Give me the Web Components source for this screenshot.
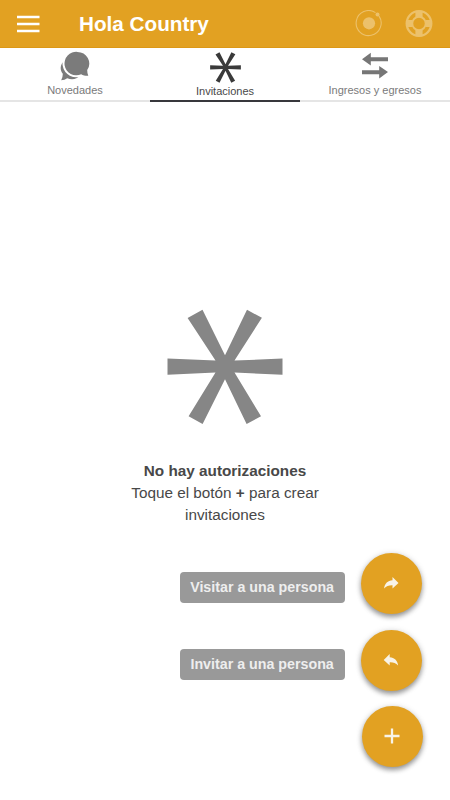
<!DOCTYPE html>
<html lang="es">
<head>
<meta charset="utf-8">
<title>Hola Country</title>
<style>
html,body{margin:0;height:100%;background:#fff;font-family:"Liberation Sans",Arial,sans-serif}
body{--brand:#e2a122;overflow:hidden}
</style>
</head>
<body>
<country-app></country-app>
<script>
const icons = {
  menu: '<svg width="24" height="18" viewBox="0 0 24 18"><path d="M1 2h22.500M1 9h22.500M1 16h22.500" stroke="#fff" stroke-width="2.300"/></svg>',
  radar: '<svg width="28" height="28" viewBox="0 0 28 28" fill="#ecc16b"><circle cx="14" cy="13.300" r="6.100"/><path d="M20.500 2.600a12.500 12.500 0 1 0 3.400 3.300" fill="none" stroke="#ecc16b" stroke-width="1.100"/><circle cx="22.500" cy="4.500" r="2"/></svg>',
  buoy: '<svg width="28" height="28" viewBox="0 0 28 28" fill="none" stroke="#ecc16b"><circle cx="14" cy="13.500" r="12.300" stroke-width="2.300"/><circle cx="14" cy="13.500" r="6.700" stroke-width="1.900"/><path d="M14 .8v6.400M14 19.800v6.400M1.200 13.500h6.400M20.400 13.500h6.400" stroke-width="7.200"/></svg>',
  chat: '<svg width="30" height="30" viewBox="0 0 30 30" fill="#7b7b7b"><path d="M6 8.500C-.2 12.500-.6 18.500 2.800 22.700Q2.900 26.200 1.200 29.200Q4.700 29 7.200 27.200C12 29.400 17 28.200 20 24.500L16 12z"/><path d="M17.400.9A11.800 11.700 0 1 0 21.200 23.200C23.200 24.500 25.800 25 28.300 24.800Q27.200 22.500 27.200 19.100A11.800 11.700 0 0 0 17.400.9z" stroke="#fff" stroke-width="4" paint-order="stroke"/></svg>',
  star: '<svg viewBox="0 0 116 116"><path fill="currentColor" d="M20.600 8.900 35.500.8 58 46.200 80 .8l14.900 8L67.500 51.500 115.500 49.600v16.200L67.500 63.400 94 107.200 79.600 115 58 70.300 35.600 115 21.600 107.200 48.500 63.400.5 65.800V49.600L48.500 51.500z"/></svg>',
  swap: '<svg width="28" height="28" viewBox="0 0 28 28" fill="#767676"><path d="M1 7.200 9.800.8v4.500H27v3.900H9.800v4.400zM27 20.100 18.200 13.900v4.300H1v4h17.200v4.400z"/></svg>',
  forward: '<svg width="16" height="14" viewBox="0 0 16 14"><path fill="#f8f3e8" d="M15.500 6.900 9.500 1v3.300C4.700 4.700 1.900 7.300 1.100 12.500c2.300-2.600 4.900-3.300 8.400-3.200v3.300z"/></svg>',
  back: '<svg width="16" height="14" viewBox="0 0 16 14"><path fill="#f8f3e8" d="M.7 6.900 6.700 1v3.300c4.800.4 7.600 3 8.400 8.200-2.300-2.600-4.900-3.300-8.400-3.200v3.300z"/></svg>',
  plus: '<svg width="16" height="16" viewBox="0 0 16 16"><path d="M8 .5v15M.5 8h15" stroke="#f8f3e8" stroke-width="2.300"/></svg>'
};
class Base extends HTMLElement {
  connectedCallback(){ if(!this.shadowRoot) this.attachShadow({mode:'open'}).innerHTML=this.view(); }
}
customElements.define('app-icon', class extends Base {
  view(){ return `<style>:host{display:block;flex:none}svg{display:block}:host([name=star]) svg{width:100%;height:100%}</style>${icons[this.getAttribute('name')]}`; }
});
customElements.define('app-header', class extends Base {
  view(){ return `<style>
:host{display:flex;align-items:center;height:48px;box-sizing:border-box;padding:0 17px 0 16px;background:var(--brand);border-bottom:1px solid #dc9817;color:#fff;flex:none}
h1{margin:0 auto 0 39px;font-size:20.7px;line-height:24px;white-space:nowrap}
.radar{margin-right:22px}
</style><app-icon name="menu"></app-icon><h1><slot></slot></h1><app-icon class="radar" name="radar"></app-icon><app-icon name="buoy"></app-icon>`; }
});
customElements.define('app-tab', class extends Base {
  view(){ return `<style>
:host{display:flex;flex-direction:column;align-items:center;flex:1;height:54px;box-sizing:border-box;border-bottom:2px solid #e5e5e5;color:#7a7a7a;font-size:11px}
:host([active]){color:#484848;border-color:#38383c}
.icon{height:34px;display:grid;place-items:center;padding-top:1px;box-sizing:border-box}
app-icon[name=star]{width:31px;height:31px;padding-top:3px;color:#3a3a3a}
span{line-height:16px;white-space:nowrap}
:host([active]) span{padding-top:1px}
</style><div class="icon"><app-icon name="${this.getAttribute('icon')}"></app-icon></div><span><slot></slot></span>`; }
});
customElements.define('empty-state', class extends Base {
  view(){ return `<style>
:host{display:flex;flex-direction:column;align-items:center;padding-top:207px;color:#484848;font-size:15.3px;line-height:22px;text-align:center}
app-icon{width:116px;height:116px;color:#868686;margin-bottom:35px}
</style><app-icon name="star"></app-icon><slot></slot>`; }
});
customElements.define('action-row', class extends Base {
  view(){ return `<style>
:host{display:flex;align-items:center;justify-content:flex-end;gap:16px}
.label{box-sizing:border-box;width:165px;height:31px;border-radius:4px;background:#999;color:#eee;font:bold 14.25px/30px "Liberation Sans",Arial,sans-serif;text-align:center;white-space:nowrap;margin-top:8px}
button{width:61px;height:61px;border:0;padding:0;border-radius:50%;background:var(--brand);display:grid;place-items:center;box-shadow:0 3px 5px rgba(0,0,0,.36),0 1px 7px rgba(0,0,0,.14)}
:host([icon=plus]) app-icon{margin-bottom:2px}
:host([icon=forward]) app-icon,:host([icon=back]) app-icon{margin-bottom:1px}
</style>${this.textContent.trim()?'<div class="label"><slot></slot></div>':''}<button><app-icon name="${this.getAttribute('icon')}"></app-icon></button>`; }
});
customElements.define('country-app', class extends Base {
  view(){ return `<style>
:host{display:flex;flex-direction:column;width:450px;height:800px;background:#fff}
nav{display:flex;flex:none}
.hint{display:flex;white-space:pre}
.actions{display:flex;flex-direction:column;gap:15.500px;margin:auto 27.400px 33px 0}
.actions action-row{padding-right:1px}
.actions action-row:last-child{padding-right:0}
</style>
<app-header>Hola Country</app-header>
<nav><app-tab icon="chat">Novedades</app-tab><app-tab icon="star" active>Invitaciones</app-tab><app-tab icon="swap">Ingresos y egresos</app-tab></nav>
<empty-state><b>No hay autorizaciones</b><div class="hint"><span>Toque el botón </span><b>+</b><span> para crear</span></div><span>invitaciones</span></empty-state>
<div class="actions"><action-row icon="forward">Visitar a una persona</action-row><action-row icon="back">Invitar a una persona</action-row><action-row icon="plus"></action-row></div>`; }
});
</script>
</body>
</html>
